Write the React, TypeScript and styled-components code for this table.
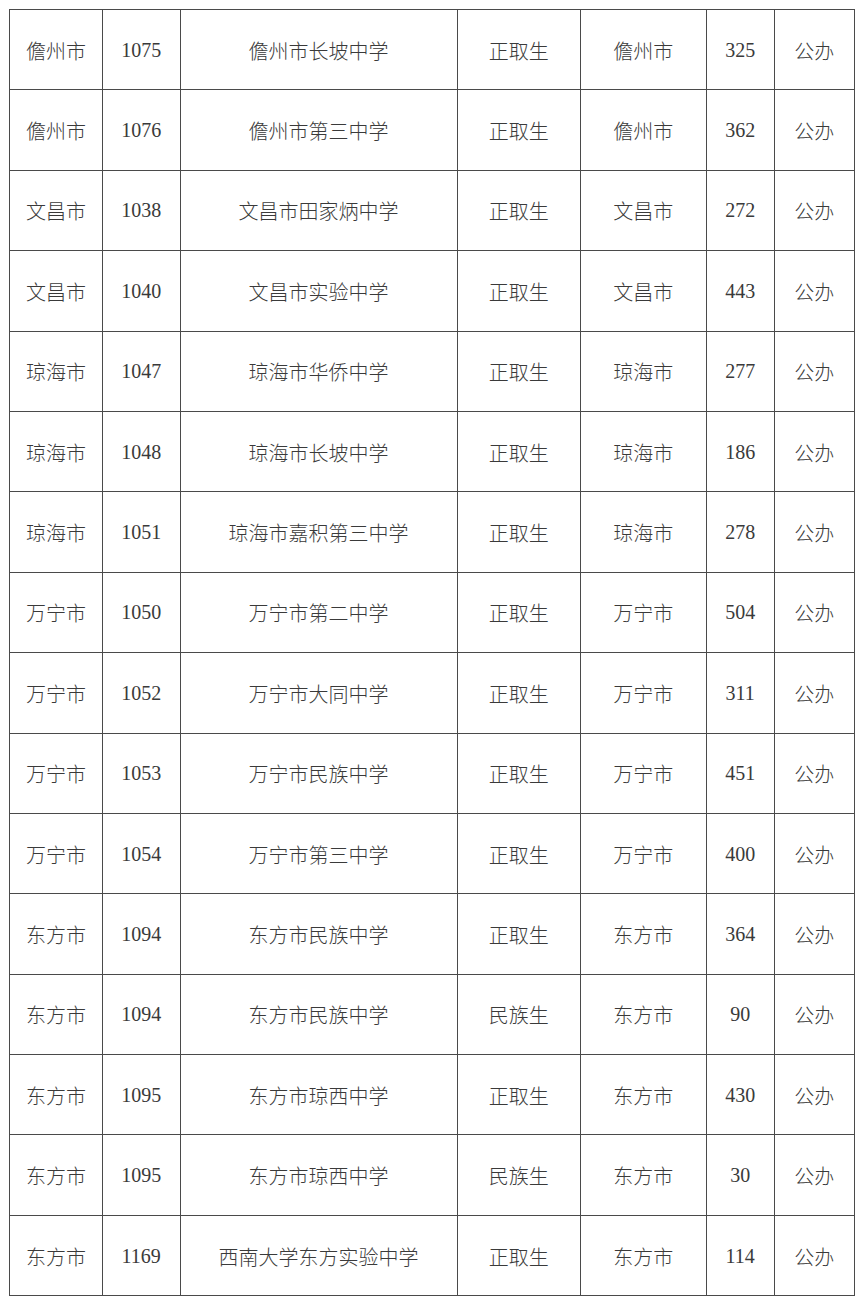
import React from "react";
import styled, { createGlobalStyle } from "styled-components";

const GlobalStyle = createGlobalStyle`
  html, body {
    margin: 0;
    padding: 0;
    background: #ffffff;
  }
`;

const Page = styled.div`
  width: 864px;
  height: 1304px;
  padding: 9px 0 0 9px;
  box-sizing: border-box;
  background: #fff;
`;

const Table = styled.table`
  border-collapse: collapse;
  table-layout: fixed;
  font-family: "Liberation Serif", "Noto Sans CJK SC", serif;
  font-size: 20px;
  font-weight: 300;
  color: #3a3a3a;
`;

const Row = styled.tr`
  height: 80.4px;
`;

const Cell = styled.td<{ $w: number }>`
  width: ${(p) => p.$w}px;
  border: 1.5px solid #4a4a4a;
  text-align: center;
  vertical-align: middle;
  padding: 1px 0 0;
  white-space: nowrap;
`;

const widths = [92, 76.5, 276, 122.5, 124.5, 67.5, 78.5];

const rows: string[][] = [
  ["儋州市", "1075", "儋州市长坡中学", "正取生", "儋州市", "325", "公办"],
  ["儋州市", "1076", "儋州市第三中学", "正取生", "儋州市", "362", "公办"],
  ["文昌市", "1038", "文昌市田家炳中学", "正取生", "文昌市", "272", "公办"],
  ["文昌市", "1040", "文昌市实验中学", "正取生", "文昌市", "443", "公办"],
  ["琼海市", "1047", "琼海市华侨中学", "正取生", "琼海市", "277", "公办"],
  ["琼海市", "1048", "琼海市长坡中学", "正取生", "琼海市", "186", "公办"],
  ["琼海市", "1051", "琼海市嘉积第三中学", "正取生", "琼海市", "278", "公办"],
  ["万宁市", "1050", "万宁市第二中学", "正取生", "万宁市", "504", "公办"],
  ["万宁市", "1052", "万宁市大同中学", "正取生", "万宁市", "311", "公办"],
  ["万宁市", "1053", "万宁市民族中学", "正取生", "万宁市", "451", "公办"],
  ["万宁市", "1054", "万宁市第三中学", "正取生", "万宁市", "400", "公办"],
  ["东方市", "1094", "东方市民族中学", "正取生", "东方市", "364", "公办"],
  ["东方市", "1094", "东方市民族中学", "民族生", "东方市", "90", "公办"],
  ["东方市", "1095", "东方市琼西中学", "正取生", "东方市", "430", "公办"],
  ["东方市", "1095", "东方市琼西中学", "民族生", "东方市", "30", "公办"],
  ["东方市", "1169", "西南大学东方实验中学", "正取生", "东方市", "114", "公办"],
];

export default function App() {
  return (
    <>
      <GlobalStyle />
      <Page>
        <Table>
          <tbody>
            {rows.map((r, i) => (
              <Row key={i}>
                {r.map((c, j) => (
                  <Cell key={j} $w={widths[j]}>
                    {c}
                  </Cell>
                ))}
              </Row>
            ))}
          </tbody>
        </Table>
      </Page>
    </>
  );
}
